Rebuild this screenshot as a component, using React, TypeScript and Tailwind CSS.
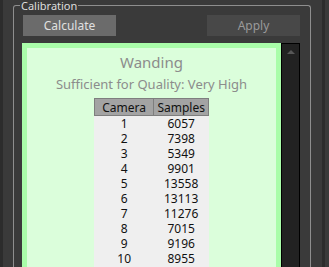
import React from 'react';

const rows = [
  { cam: 1, samples: 6057 },
  { cam: 2, samples: 7398 },
  { cam: 3, samples: 5349 },
  { cam: 4, samples: 9901 },
  { cam: 5, samples: 13558 },
  { cam: 6, samples: 13113 },
  { cam: 7, samples: 11276 },
  { cam: 8, samples: 7015 },
  { cam: 9, samples: 9196 },
  { cam: 10, samples: 8955 },
];

const font = { fontFamily: '"Segoe UI", "Noto Sans", sans-serif' };

export default function App() {
  return (
    <div className="w-[329px] h-[267px] overflow-hidden bg-[#3a3a3a] flex" style={font}>
      {/* left edge strip */}
      <div className="w-[3px] shrink-0 bg-[#2c2c2c]" />

      {/* Calibration group */}
      <div className="ml-[10px] mt-[5px] w-[298px] shrink-0 relative border border-b-0 border-[#8e8e8e] rounded-t-[3px] pl-[8px] pr-[10px] pt-[9px] flex flex-col">
        <span className="absolute -top-[6px] left-[6px] px-[1px] bg-[#3a3a3a] text-[11px] leading-[12px] text-[#dedede]">
          Calibration
        </span>

        <div className="flex justify-between h-[21px]">
          <button className="ml-[1px] w-[93px] h-[21px] bg-[#6b6b6b] text-[12px] text-[#e0e0e0] leading-[21px]">
            Calculate
          </button>
          <button className="w-[93px] h-[21px] bg-[#484848] text-[12px] text-[#9a9a9a] leading-[21px]">
            Apply
          </button>
        </div>

        <div className="mt-[7px] flex flex-1 min-h-0">
          {/* results panel */}
          <div className="w-[259px] border-[5px] border-b-0 border-[#a9fda9] bg-[#dbfedb] flex flex-col items-center">
            <div className="mt-[3px] text-[15px] leading-[22px] text-[#8c8c8c]">Wanding</div>
            <div className="mt-[2px] text-[13px] leading-[18px] text-[#8c8c8c]">Sufficient for Quality: Very High</div>

            <table className="mt-[5px] w-[115px] border-collapse text-[12px] text-[#111] bg-[#efefef]">
              <thead>
                <tr className="h-[17px] bg-[#a3a3a3]">
                  <th className="w-[60px] border border-[#7e7e7e] font-normal leading-[15px] p-0">Camera</th>
                  <th className="w-[55px] border border-[#7e7e7e] font-normal leading-[15px] p-0">Samples</th>
                </tr>
              </thead>
              <tbody>
                {rows.map((r) => (
                  <tr key={r.cam} className="h-[15px]">
                    <td className="text-center leading-[15px] p-0">{r.cam}</td>
                    <td className="text-center leading-[15px] p-0">{r.samples}</td>
                  </tr>
                ))}
                <tr className="h-[15px]">
                  <td className="p-0" />
                  <td className="p-0" />
                </tr>
              </tbody>
            </table>
          </div>

          {/* scrollbar */}
          <div className="w-[19px] border border-b-0 border-black bg-[#222222] flex justify-center pt-[6px]">
            <svg width="8" height="4" viewBox="0 0 8 4">
              <polygon points="4,0 8,4 0,4" fill="#575757" />
            </svg>
          </div>
        </div>
      </div>

      <div className="w-[11px] shrink-0" />
      <div className="w-[3px] shrink-0 bg-[#2c2c2c]" />
    </div>
  );
}
